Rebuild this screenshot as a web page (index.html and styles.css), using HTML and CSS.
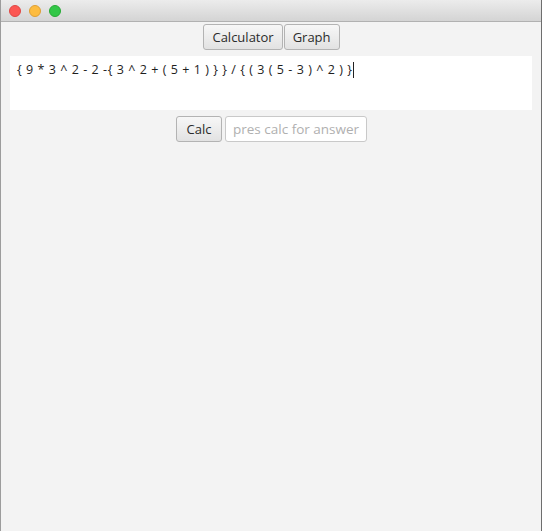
FILE: index.html
```html
<!DOCTYPE html>
<html>
<head>
<meta charset="utf-8">
<link rel="stylesheet" href="styles.css">
</head>
<body>
<div class="window">
  <div class="titlebar">
    <span class="light red"></span>
    <span class="light yellow"></span>
    <span class="light green"></span>
  </div>
  <div class="content">
    <div class="tabs">
      <button class="btn tab">Calculator</button><button class="btn tab">Graph</button>
    </div>
    <div class="editor"><span class="expr">{ 9 * 3 ^ 2 - 2 -{ 3 ^ 2 + ( 5 + 1 ) } } / { ( 3 ( 5 - 3 ) ^ 2 ) }</span><span class="caret"></span></div>
    <div class="calc-row">
      <button class="btn calc">Calc</button>
      <div class="answer">pres calc for answer</div>
    </div>
  </div>
</div>
</body>
</html>
```
FILE: styles.css
```css
html, body {
  margin: 0;
  padding: 0;
  background: #f3f3f3;
}
.window {
  width: 542px;
  height: 531px;
  display: flex;
  flex-direction: column;
  box-sizing: border-box;
  border-left: 1px solid #9c9c9c;
  border-right: 1px solid #6e6e6e;
  font-family: "Open Sans", "Liberation Sans", sans-serif;
  overflow: hidden;
}
.titlebar {
  height: 22px;
  flex: 0 0 22px;
  box-sizing: border-box;
  background: linear-gradient(#ececec, #d4d4d4);
  border-bottom: 1px solid #b1b1b1;
  display: flex;
  align-items: center;
  padding-left: 8px;
  gap: 8px;
}
.light {
  width: 12px;
  height: 12px;
  border-radius: 50%;
  box-sizing: border-box;
}
.red { background: #fc5753; border: 1px solid #df4744; }
.yellow { background: #fdbc40; border: 1px solid #de9f34; }
.green { background: #33c748; border: 1px solid #27aa35; }
.content {
  flex: 1;
  background: #f3f3f3;
  display: flex;
  flex-direction: column;
  padding: 0 9px 0 9px;
}
.tabs {
  display: flex;
  justify-content: center;
  margin-top: 2px;
  margin-left: 1px;
}
.btn {
  font-family: "Open Sans", "Liberation Sans", sans-serif;
  font-size: 13px;
  color: #2b2b2b;
  height: 26px;
  box-sizing: border-box;
  border: 1px solid #b3b3b3;
  border-radius: 3px;
  background: linear-gradient(#f7f7f7, #e2e2e2);
  padding: 0 8px;
  margin: 0;
  line-height: 24px;
}
.tab + .tab { margin-left: 1px; }
.editor {
  margin-top: 6px;
  height: 54px;
  background: #ffffff;
  box-sizing: border-box;
  padding: 5px 7px;
  font-size: 12.5px;
  letter-spacing: 0.55px;
  color: #1e1e1e;
  line-height: 17px;
  display: flex;
  align-items: flex-start;
}
.expr { white-space: pre; }
.caret {
  display: inline-block;
  width: 1px;
  height: 16px;
  background: #222;
  margin-left: 0;
  margin-top: 1px;
}
.calc-row {
  display: flex;
  justify-content: center;
  gap: 3px;
  margin-top: 6px;
  margin-left: 1px;
}
.calc { width: 46px; padding: 0; }
.answer {
  width: 142px;
  height: 26px;
  box-sizing: border-box;
  border: 1px solid #c9c9c9;
  border-radius: 3px;
  background: #fff;
  color: #b0b0b0;
  font-size: 13.5px;
  line-height: 24px;
  padding-left: 7px;
  white-space: nowrap;
  overflow: hidden;
}
```
